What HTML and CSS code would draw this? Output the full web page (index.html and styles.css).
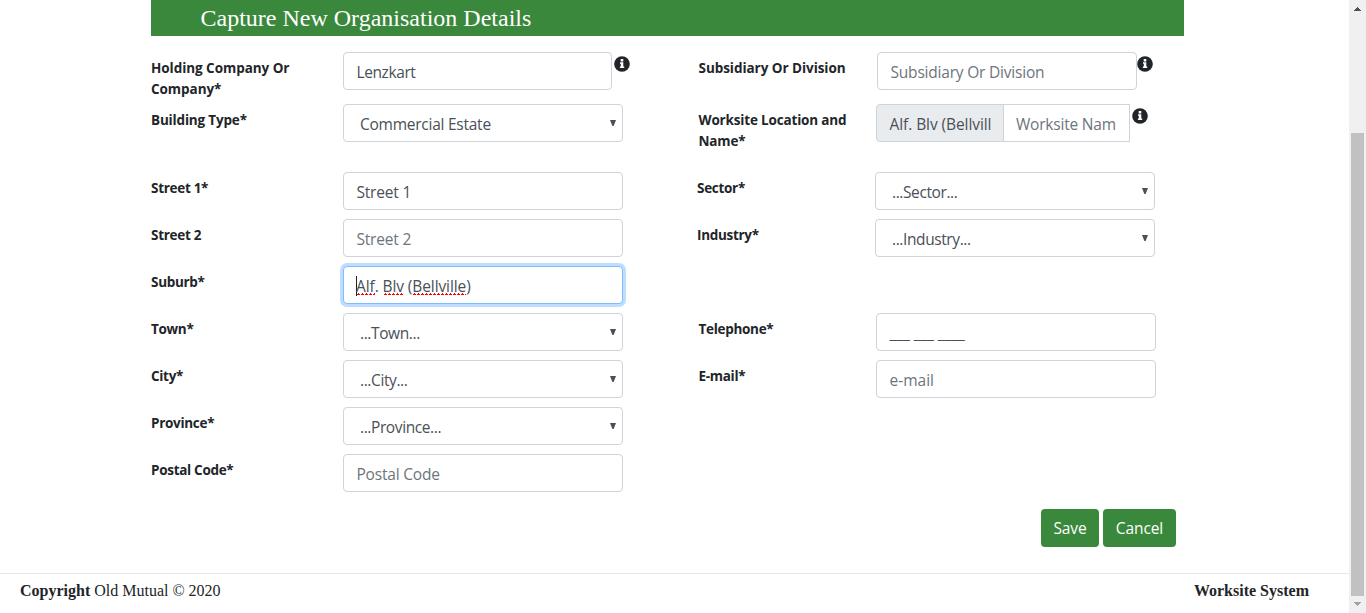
FILE: index.html
```html
<!DOCTYPE html>
<html lang="en">
<head>
<meta charset="utf-8">
<title>Worksite System</title>
<link rel="stylesheet" href="styles.css">
</head>
<body>
<svg class="defs" width="0" height="0"><symbol id="info" viewBox="0 0 16 16"><circle cx="8" cy="8" r="7.8" fill="#212529"/><path fill="#fff" d="M6.7 3h2.6v2.4H6.7zM6 6.3h3.3v4.3h.9v1.5H5.9v-1.5h.9V7.8H6z"/></symbol></svg>
<div class="page">
  <main>
    <h1 class="banner">Capture New Organisation Details</h1>
    <div class="form">
      <div class="row">
        <div class="label wide">Holding Company Or Company*</div>
        <div class="slot"><div class="control company">Lenzkart</div><svg class="info"><use href="#info"/></svg></div>
        <div class="label wide">Subsidiary Or Division</div>
        <div class="slot inset"><div class="control subsidiary hint">Subsidiary Or Division</div><svg class="info near"><use href="#info"/></svg></div>
      </div>
      <div class="row tall">
        <div class="label medium">Building Type*</div>
        <div class="slot"><div class="control select">Commercial Estate<i class="arrow"></i></div></div>
        <div class="label medium">Worksite Location and Name*</div>
        <div class="slot"><div class="control prefix">Alf. Blv (Bellvill</div><div class="control site hint">Worksite Nam</div><svg class="info"><use href="#info"/></svg></div>
      </div>
      <div class="row shifted">
        <div class="label">Street 1*</div>
        <div class="slot"><div class="control">Street 1</div></div>
        <div class="label">Sector*</div>
        <div class="slot"><div class="control select dotted">...Sector...<i class="arrow"></i></div></div>
      </div>
      <div class="row shifted">
        <div class="label">Street 2</div>
        <div class="slot"><div class="control hint">Street 2</div></div>
        <div class="label">Industry*</div>
        <div class="slot"><div class="control select dotted">...Industry...<i class="arrow"></i></div></div>
      </div>
      <div class="row">
        <div class="label">Suburb*</div>
        <div class="slot"><div class="control focused"><i class="caret"></i><span class="typo">Alf</span>.&nbsp;<span class="typo">Blv</span>&nbsp;(<span class="typo">Bellville</span>)</div></div>
      </div>
      <div class="row">
        <div class="label">Town*</div>
        <div class="slot"><div class="control select dotted">...Town...<i class="arrow"></i></div></div>
        <div class="label">Telephone*</div>
        <div class="slot"><div class="control phone">___ ___ ____</div></div>
      </div>
      <div class="row">
        <div class="label">City*</div>
        <div class="slot"><div class="control select dotted">...City...<i class="arrow"></i></div></div>
        <div class="label">E-mail*</div>
        <div class="slot"><div class="control hint email">e-mail</div></div>
      </div>
      <div class="row">
        <div class="label">Province*</div>
        <div class="slot"><div class="control select dotted">...Province...<i class="arrow"></i></div></div>
      </div>
      <div class="row">
        <div class="label">Postal Code*</div>
        <div class="slot"><div class="control hint">Postal Code</div></div>
      </div>
    </div>
    <div class="actions"><button class="btn save">Save</button><button class="btn cancel">Cancel</button></div>
  </main>
  <footer><span><b>Copyright</b> Old Mutual © 2020</span><b>Worksite System</b></footer>
</div>
<div class="scrollbar"><svg width="17" height="17" shape-rendering="crispEdges"><path fill="#505050" d="M5 11h7v-1h-1V9h-1V8H9V7H8v1H7v1H6v1H5z"/></svg><div class="thumb"></div><svg width="17" height="17" shape-rendering="crispEdges"><path fill="#a3a3a3" d="M5 6h7v1h-1v1h-1v1H9v1H8V9H7V8H6V7H5z"/></svg></div>
</body>
</html>
```
FILE: styles.css
```css
* { box-sizing: border-box; }
body { margin: 0; height: 613px; display: flex; overflow: hidden; background: #fff; color: #212529; font-family: "Open Sans", "Noto Sans", sans-serif; }
.defs { display: none; }
.page { width: 1349px; height: 613px; display: flex; flex-direction: column; }
main { height: 573px; padding-left: 151px; }
.banner { margin: 0; width: 1033px; height: 36px; padding-left: 49.5px; background: #3a883c; color: #fff; font: 400 24px/37px "Liberation Serif", serif; }
.form { padding-top: 16px; width: 1010px; }
.row { height: 47px; display: grid; grid-template-columns: 192px 280px 75px 178px 280px; }
.row:first-child { height: 52px; }
.row.tall { height: 68px; }
.row > :nth-child(3) { grid-column: 4; padding-left: .5px; }
.row.shifted { grid-template-columns: 192px 280px 74px 178px 280px; }
.row.shifted > :nth-child(3) { padding-left: 0; }
.label { padding: 6px 20px 0 0; font-size: 13.5px; line-height: 21px; font-weight: 700; letter-spacing: -.3px; }
.label.wide { letter-spacing: -.05px; }
.label.medium { letter-spacing: -.17px; }
.slot { display: flex; align-items: flex-start; }
.slot.inset { padding-left: 1px; }
.control { flex: none; width: 280px; height: 38px; padding: 2px 12px 0 12.5px; display: flex; align-items: center; border: 1px solid #ced4da; border-radius: 4px; background: #fff; color: #495057; font-size: 15.5px; line-height: 24px; letter-spacing: -.2px; white-space: nowrap; }
.hint { color: #6c757d; }
.company { width: 269px; letter-spacing: -.4px; }
.subsidiary { width: 260px; }
.select { padding: 2px 6px 0 16px; justify-content: space-between; letter-spacing: -.25px; }
.dotted { letter-spacing: -.4px; }
.arrow { width: 6px; height: 6px; margin-top: -2px; background: #495057; clip-path: polygon(0 0, 100% 0, 60% 100%, 40% 100%); }
.prefix { width: 128px; background: #e9ecef; border-radius: 4px 0 0 4px; letter-spacing: -.08px; }
.site { width: 127px; margin-left: -1px; border-radius: 0; padding-left: 12px; }
.email { letter-spacing: 0; }
.info { flex: none; width: 16px; height: 16px; margin: 4px 0 0 2px; }
.info.near { margin-left: 0; }
.focused { padding-left: 12px; border-color: #80bdff; box-shadow: 0 0 0 3px #bfdeff; letter-spacing: -.1px; }
.caret { width: 1px; height: 20px; margin-right: -1px; background: #212529; }
.typo { height: 24px; background: conic-gradient(from 135deg at 50% 0, #f00 90deg, transparent 0) 0 19px / 4px 2px repeat-x; }
.phone { letter-spacing: -.06px; }
.actions { display: flex; gap: 4px; padding: 8px 0 0 890px; }
.btn { height: 38px; padding: 0 0 1px; border: 0; border-radius: 4px; background: #3a883c; color: #fff; font: 15.5px "Open Sans", sans-serif; letter-spacing: -.1px; }
.save { width: 58px; }
.cancel { width: 73px; }
footer { height: 40px; border-top: 1px solid #e5e7e9; padding: 7px 40px 0 20px; display: flex; justify-content: space-between; font: 16px/19px "Liberation Serif", serif; }
.scrollbar { width: 17px; height: 613px; display: flex; flex-direction: column; justify-content: space-between; background: #f0f0f0; }
.scrollbar svg { display: block; }
.thumb { width: 13px; height: 463px; margin: auto 2px 0; background: #c1c1c1; }
```
